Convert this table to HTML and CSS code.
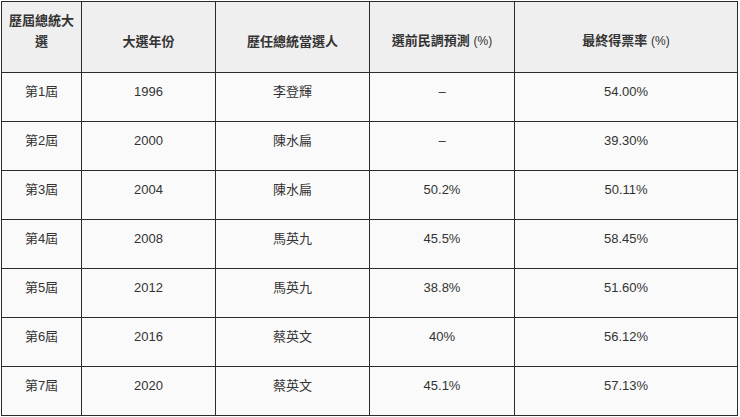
FILE: index.html
```html
<!DOCTYPE html>
<html lang="zh-Hant">
<head>
<meta charset="utf-8">
<title>歷屆總統大選</title>
<link rel="stylesheet" href="styles.css">
</head>
<body>
<table class="results">
  <colgroup>
    <col class="c1"><col class="c2"><col class="c3"><col class="c4"><col class="c5">
  </colgroup>
  <thead>
    <tr>
      <th>歷屆總統大選</th>
      <th>大選年份</th>
      <th>歷任總統當選人</th>
      <th>選前民調預測 <span class="unit">(%)</span></th>
      <th>最終得票率 <span class="unit">(%)</span></th>
    </tr>
  </thead>
  <tbody>
    <tr><td>第1屆</td><td>1996</td><td>李登輝</td><td>–</td><td>54.00%</td></tr>
    <tr><td>第2屆</td><td>2000</td><td>陳水扁</td><td>–</td><td>39.30%</td></tr>
    <tr><td>第3屆</td><td>2004</td><td>陳水扁</td><td>50.2%</td><td>50.11%</td></tr>
    <tr><td>第4屆</td><td>2008</td><td>馬英九</td><td>45.5%</td><td>58.45%</td></tr>
    <tr><td>第5屆</td><td>2012</td><td>馬英九</td><td>38.8%</td><td>51.60%</td></tr>
    <tr><td>第6屆</td><td>2016</td><td>蔡英文</td><td>40%</td><td>56.12%</td></tr>
    <tr><td>第7屆</td><td>2020</td><td>蔡英文</td><td>45.1%</td><td>57.13%</td></tr>
  </tbody>
</table>
</body>
</html>
```
FILE: styles.css
```css
html, body {
  margin: 0;
  padding: 0;
  background: #ffffff;
}
body {
  padding: 1px 0 0 1px;
  font-family: "Liberation Sans", "Noto Sans CJK TC", sans-serif;
  color: #333333;
}
.results {
  width: 737px;
  table-layout: fixed;
  border-collapse: collapse;
  border: 1px solid #666666;
  font-size: 13px;
  line-height: 21px;
}
.c1 { width: 80px; }
.c2 { width: 134px; }
.c3 { width: 154px; }
.c4 { width: 145px; }
.c5 { width: 223px; }
.results th,
.results td {
  border: 1px solid #2b2b2b;
  padding: 8px 6px 19px;
  text-align: center;
  vertical-align: bottom;
}
.results th {
  background: #efefef;
  font-weight: 600;
  color: #333333;
  padding-bottom: 20px;
}
.results td {
  background: #fafafa;
  font-weight: 400;
}
.unit {
  font-weight: 400;
  font-size: 12px;
}
```
